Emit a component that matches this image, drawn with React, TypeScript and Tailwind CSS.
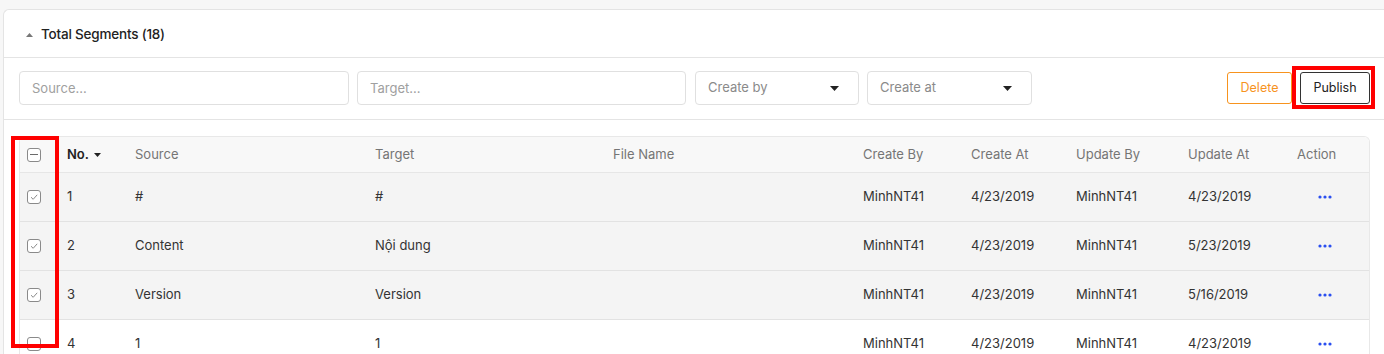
import { Fragment } from 'react'

type Row = {
  no: number
  source: string
  target: string
  fileName: string
  createBy: string
  createAt: string
  updateBy: string
  updateAt: string
  selected: boolean
}

const ROWS: Row[] = [
  { no: 1, source: '#', target: '#', fileName: '', createBy: 'MinhNT41', createAt: '4/23/2019', updateBy: 'MinhNT41', updateAt: '4/23/2019', selected: true },
  { no: 2, source: 'Content', target: 'Nội dung', fileName: '', createBy: 'MinhNT41', createAt: '4/23/2019', updateBy: 'MinhNT41', updateAt: '5/23/2019', selected: true },
  { no: 3, source: 'Version', target: 'Version', fileName: '', createBy: 'MinhNT41', createAt: '4/23/2019', updateBy: 'MinhNT41', updateAt: '5/16/2019', selected: true },
  { no: 4, source: '1', target: '1', fileName: '', createBy: 'MinhNT41', createAt: '4/23/2019', updateBy: 'MinhNT41', updateAt: '4/23/2019', selected: false },
]

const COLS = 'grid grid-cols-[36px_68px_240px_238px_250px_108px_105px_112px_109px_1fr]'

function Checkbox({ state }: { state: 'on' | 'off' | 'mixed' }) {
  return (
    <span className="flex h-[14px] w-[14px] items-center justify-center rounded-[3px] border border-[#8a8a8a] bg-white">
      {state === 'on' && (
        <svg width="10" height="10" viewBox="0 0 10 10" fill="none">
          <path d="M2 5.2 4.2 7.3 8.2 2.8" stroke="#8a8a8a" strokeWidth="1" />
        </svg>
      )}
      {state === 'mixed' && <span className="h-px w-[8px] bg-[#6b6b6b]" />}
    </span>
  )
}

function Caret() {
  return (
    <svg width="9" height="5" viewBox="0 0 9 5">
      <path d="M0 0h9L4.5 5z" fill="#222" />
    </svg>
  )
}

function Dots() {
  return (
    <svg width="14" height="4" viewBox="0 0 14 4">
      <circle cx="2" cy="2" r="1.6" fill="#2a4ff0" />
      <circle cx="7" cy="2" r="1.6" fill="#2a4ff0" />
      <circle cx="12" cy="2" r="1.6" fill="#2a4ff0" />
    </svg>
  )
}

export default function App() {
  return (
    <div
      className="min-h-[354px] bg-[#f7f7f7] pt-[9px] pl-[3px] text-[13px] text-[#333]"
      style={{ fontFamily: 'Inter, "Noto Sans", sans-serif' }}
    >
      <div className="rounded-tl-md border border-r-0 border-[#e4e4e4] bg-white">
        {/* Panel header */}
        <div className="flex h-[48px] items-center gap-[8px] border-b border-[#e4e4e4] pt-[2px] pl-[22px]">
          <svg width="7" height="4" viewBox="0 0 7 4">
            <path d="M0 4h7L3.5 0z" fill="#777" />
          </svg>
          <span className="text-[13.5px] font-medium tracking-[-0.2px] text-[#222]">Total Segments (18)</span>
        </div>

        {/* Filters */}
        <div className="flex items-center border-b border-[#e4e4e4] pt-[13px] pb-[14px] pl-[15px] pr-[14px]">
          <input
            className="h-[34px] w-[330px] rounded-[4px] border border-[#e0e0e0] px-3 text-[13px] outline-none placeholder:text-[#a0a0a0]"
            placeholder="Source..."
          />
          <input
            className="ml-[8px] h-[34px] w-[329px] rounded-[4px] border border-[#e0e0e0] px-3 text-[13px] outline-none placeholder:text-[#a0a0a0]"
            placeholder="Target..."
          />
          <div className="ml-[9px] flex h-[34px] w-[164px] items-center justify-between rounded-[4px] border border-[#e0e0e0] pl-3 pr-[19px] text-[#8a8a8a]">
            <span>Create by</span>
            <Caret />
          </div>
          <div className="ml-[8px] flex h-[34px] w-[165px] items-center justify-between rounded-[4px] border border-[#e0e0e0] pl-3 pr-[19px] text-[#8a8a8a]">
            <span>Create at</span>
            <Caret />
          </div>
          <div className="ml-auto flex items-center gap-[8px]">
            <button className="h-[32px] w-[65px] rounded-[3px] border border-[#f7931e] text-[12.5px] text-[#f7931e]">
              Delete
            </button>
            <div className="relative">
              <button className="h-[32px] w-[70px] rounded-[3px] border border-[#333] text-[12.5px] text-[#222]">
                Publish
              </button>
              <span className="pointer-events-none absolute -top-[6px] -right-[5px] -bottom-[5px] -left-[8px] border-[4px] border-[#ff0000]" />
            </div>
          </div>
        </div>

        {/* Table */}
        <div className="pt-[16px] pl-[15px] pr-[14px]">
          <div className="relative">
            <div className="overflow-hidden rounded-t-md border border-b-0 border-[#e8e8e8]">
              <div className={`${COLS} h-[36px] items-center border-b border-[#e6e6e6] bg-[#f8f8f8] text-[#757575]`}>
                <div className="pl-[7px]">
                  <Checkbox state="mixed" />
                </div>
                <div className="flex items-center gap-[5px] pl-[11px] font-semibold text-[#222]">
                  No.
                  <svg width="7" height="4" viewBox="0 0 7 4">
                    <path d="M0 0h7L3.5 4z" fill="#222" />
                  </svg>
                </div>
                <div className="pl-[11px]">Source</div>
                <div className="pl-[11px]">Target</div>
                <div className="pl-[11px]">File Name</div>
                <div className="pl-[11px]">Create By</div>
                <div className="pl-[11px]">Create At</div>
                <div className="pl-[11px]">Update By</div>
                <div className="pl-[11px]">Update At</div>
                <div className="pl-[11px]">Action</div>
              </div>
              {ROWS.map((r) => (
                <Fragment key={r.no}>
                  <div
                    className={`${COLS} h-[49px] items-center border-b border-[#e2e2e2] ${r.selected ? 'bg-[#f4f4f4]' : 'bg-white'}`}
                  >
                    <div className="pl-[7px]">
                      <Checkbox state={r.selected ? 'on' : 'off'} />
                    </div>
                    <div className="pl-[11px]">{r.no}</div>
                    <div className="pl-[11px]">{r.source}</div>
                    <div className="pl-[11px]">{r.target}</div>
                    <div className="pl-[11px]">{r.fileName}</div>
                    <div className="pl-[11px]">{r.createBy}</div>
                    <div className="pl-[11px]">{r.createAt}</div>
                    <div className="pl-[11px]">{r.updateBy}</div>
                    <div className="pl-[11px]">{r.updateAt}</div>
                    <div className="pl-[32px]">
                      <Dots />
                    </div>
                  </div>
                </Fragment>
              ))}
            </div>
            <span className="pointer-events-none absolute top-0 left-[-8px] h-[212px] w-[48px] border-[4px] border-[#ff0000]" />
          </div>
        </div>
      </div>
    </div>
  )
}
